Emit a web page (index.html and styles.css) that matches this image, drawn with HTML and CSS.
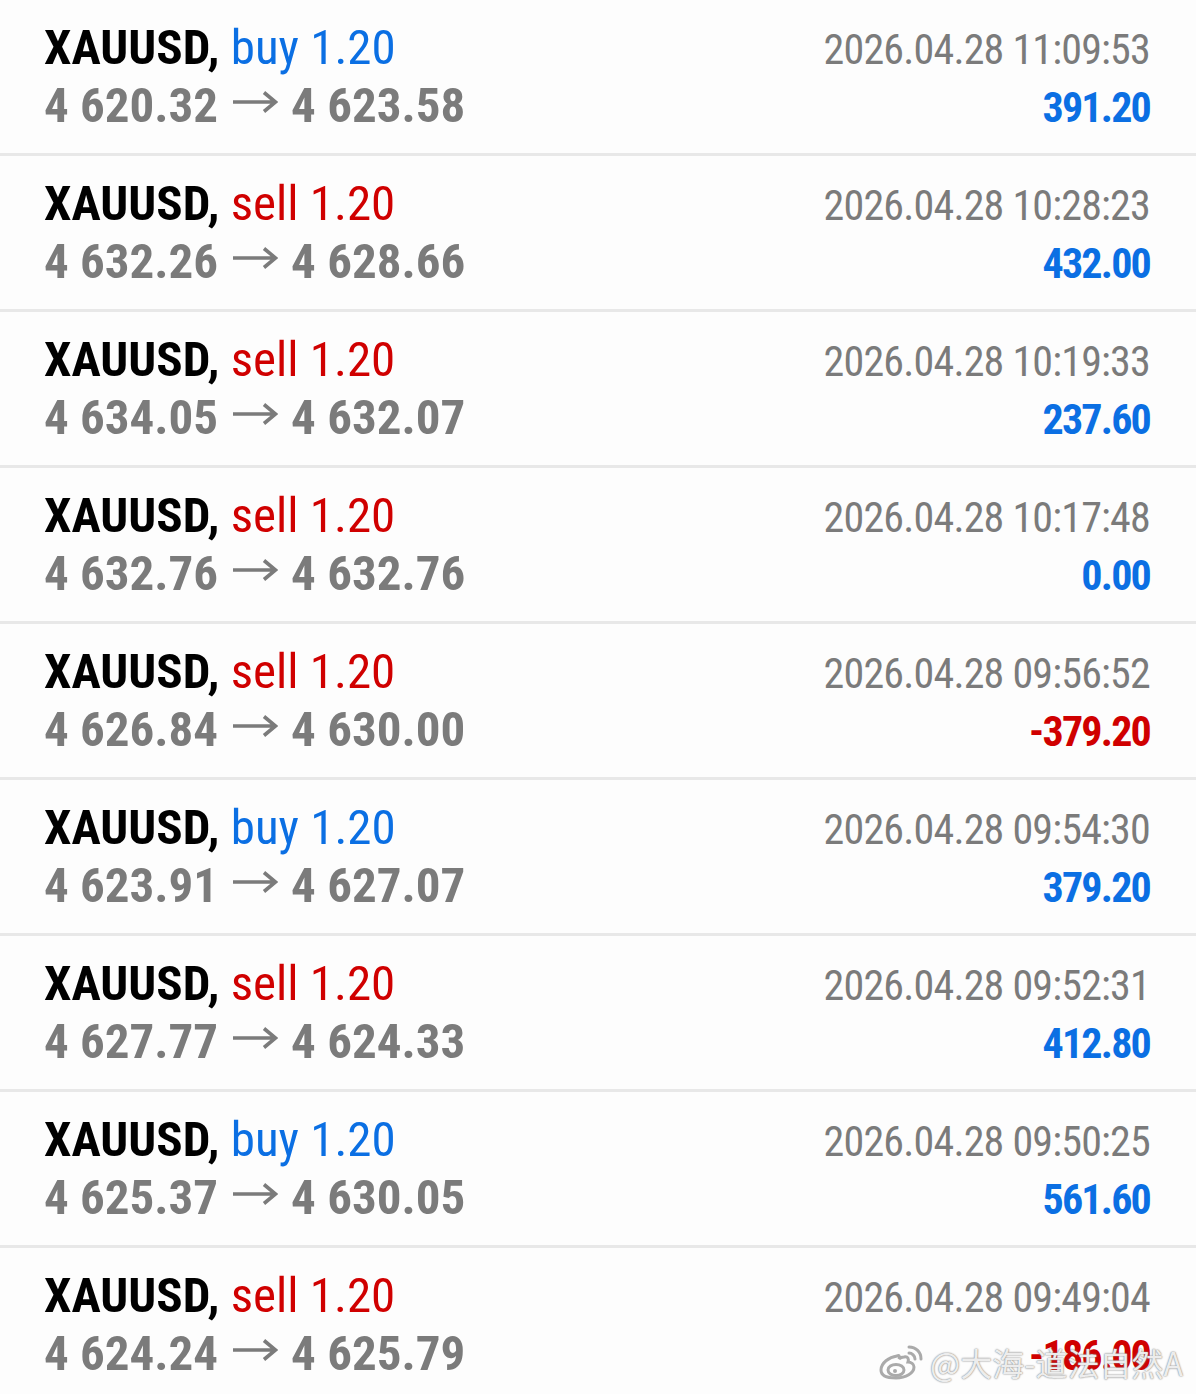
FILE: index.html
```html
<!DOCTYPE html>
<html lang="en">
<head>
  <meta charset="UTF-8" />
  <title>History</title>
  <link rel="stylesheet" href="styles.css">
</head>
<body>

  <div class="deals">
    <div class="deal">
      <div class="title">XAUUSD, <span class="buy">buy 1.20</span></div>
      <div class="time">2026.04.28 11:09:53</div>
      <div class="prices">4 620.32<svg class="arrow" width="46" height="22" viewBox="0 0 46 22"><path d="M1 11H43M32 1.5L43.5 11L32 20.5" /></svg>4 623.58</div>
      <div class="profit">391.20</div>
    </div>
    <div class="deal">
      <div class="title">XAUUSD, <span class="sell">sell 1.20</span></div>
      <div class="time">2026.04.28 10:28:23</div>
      <div class="prices">4 632.26<svg class="arrow" width="46" height="22" viewBox="0 0 46 22"><path d="M1 11H43M32 1.5L43.5 11L32 20.5" /></svg>4 628.66</div>
      <div class="profit">432.00</div>
    </div>
    <div class="deal">
      <div class="title">XAUUSD, <span class="sell">sell 1.20</span></div>
      <div class="time">2026.04.28 10:19:33</div>
      <div class="prices">4 634.05<svg class="arrow" width="46" height="22" viewBox="0 0 46 22"><path d="M1 11H43M32 1.5L43.5 11L32 20.5" /></svg>4 632.07</div>
      <div class="profit">237.60</div>
    </div>
    <div class="deal">
      <div class="title">XAUUSD, <span class="sell">sell 1.20</span></div>
      <div class="time">2026.04.28 10:17:48</div>
      <div class="prices">4 632.76<svg class="arrow" width="46" height="22" viewBox="0 0 46 22"><path d="M1 11H43M32 1.5L43.5 11L32 20.5" /></svg>4 632.76</div>
      <div class="profit">0.00</div>
    </div>
    <div class="deal">
      <div class="title">XAUUSD, <span class="sell">sell 1.20</span></div>
      <div class="time">2026.04.28 09:56:52</div>
      <div class="prices">4 626.84<svg class="arrow" width="46" height="22" viewBox="0 0 46 22"><path d="M1 11H43M32 1.5L43.5 11L32 20.5" /></svg>4 630.00</div>
      <div class="profit loss">-379.20</div>
    </div>
    <div class="deal">
      <div class="title">XAUUSD, <span class="buy">buy 1.20</span></div>
      <div class="time">2026.04.28 09:54:30</div>
      <div class="prices">4 623.91<svg class="arrow" width="46" height="22" viewBox="0 0 46 22"><path d="M1 11H43M32 1.5L43.5 11L32 20.5" /></svg>4 627.07</div>
      <div class="profit">379.20</div>
    </div>
    <div class="deal">
      <div class="title">XAUUSD, <span class="sell">sell 1.20</span></div>
      <div class="time">2026.04.28 09:52:31</div>
      <div class="prices">4 627.77<svg class="arrow" width="46" height="22" viewBox="0 0 46 22"><path d="M1 11H43M32 1.5L43.5 11L32 20.5" /></svg>4 624.33</div>
      <div class="profit">412.80</div>
    </div>
    <div class="deal">
      <div class="title">XAUUSD, <span class="buy">buy 1.20</span></div>
      <div class="time">2026.04.28 09:50:25</div>
      <div class="prices">4 625.37<svg class="arrow" width="46" height="22" viewBox="0 0 46 22"><path d="M1 11H43M32 1.5L43.5 11L32 20.5" /></svg>4 630.05</div>
      <div class="profit">561.60</div>
    </div>
    <div class="deal">
      <div class="title">XAUUSD, <span class="sell">sell 1.20</span></div>
      <div class="time">2026.04.28 09:49:04</div>
      <div class="prices">4 624.24<svg class="arrow" width="46" height="22" viewBox="0 0 46 22"><path d="M1 11H43M32 1.5L43.5 11L32 20.5" /></svg>4 625.79</div>
      <div class="profit loss">-186.00</div>
    </div>
  </div>

  <div class="watermark">
    <svg class="weibo" width="48" height="36" viewBox="0 0 48 36">
      <path d="M19 12c-8 1-16 7-16 14 0 6 7 8 15 8 10 0 18-5 18-11 0-3-3-5-6-5 1-3 0-6-4-5-2 0-4 1-5 2 1-3 0-4-2-3z" fill="none" stroke="#aaa" stroke-width="3"/>
      <ellipse cx="18" cy="26" rx="8" ry="5.5" fill="none" stroke="#aaa" stroke-width="3"/>
      <circle cx="17" cy="27" r="2" fill="#aaa"/>
      <path d="M31 3c7 0 12 5 12 12M31 9c3 0 6 3 6 6" fill="none" stroke="#aaa" stroke-width="3" stroke-linecap="round"/>
    </svg>
    <span>@大海-道法自然A</span>
  </div>

</body>
</html>
```
FILE: styles.css
```css
body {
  margin: 0;
  padding: 0;
  background: #fdfdfd;
  font-family: "Roboto Condensed", Roboto, sans-serif;
}

.deals {
  display: flex;
  flex-direction: column;
}

.deal {
  display: grid;
  grid-template-columns: 1fr auto;
  align-items: baseline;
  align-content: start;
  height: 156px;
  box-sizing: border-box;
  padding: 20px 46px 0 44px;
  border-bottom: 3px solid #e8e8e8;
  line-height: 56px;
}

.title {
  font-size: 49px;
  font-weight: 700;
  color: #000;
}

.title span {
  font-weight: 400;
}

.buy {
  color: #0b6fe3;
}

.sell {
  color: #d00000;
}

.prices {
  font-size: 49px;
  font-weight: 700;
  color: #7b7b7b;
}

.arrow {
  display: inline-block;
  vertical-align: 9px;
  margin: 0 13px 0 14px;
  fill: none;
  stroke: #7b7b7b;
  stroke-width: 3.6;
}

.time {
  font-size: 42px;
  letter-spacing: -0.8px;
  color: #7b7b7b;
  text-align: right;
}

.profit {
  font-size: 42px;
  font-weight: 700;
  letter-spacing: -1.8px;
  color: #0b6fe3;
  text-align: right;
}

.profit.loss {
  color: #d00000;
}

.watermark {
  position: absolute;
  left: 878px;
  top: 1339px;
  display: flex;
  align-items: center;
  gap: 4px;
  font-family: "Noto Sans CJK SC", sans-serif;
  font-size: 32px;
  color: rgba(255, 255, 255, 0.85);
  text-shadow: 0 0 2px #888, 0 0 1px #999;
}
```
